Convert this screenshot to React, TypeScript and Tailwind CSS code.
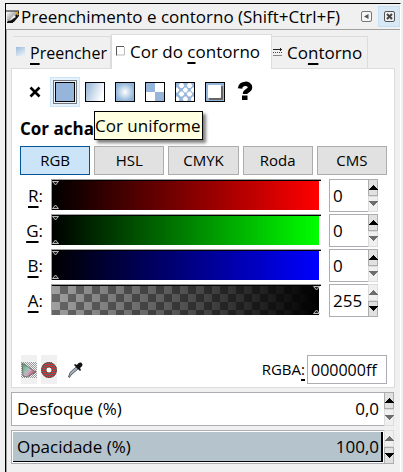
import type { ReactNode } from "react";

const tones = {
  r: "bg-linear-to-r/srgb from-black to-[#ff0000]",
  g: "bg-linear-to-r/srgb from-black to-[#00ff00]",
  b: "bg-linear-to-r/srgb from-black to-[#0000ff]",
  a: "bg-[linear-gradient(to_right,rgba(0,0,0,0),#000),repeating-conic-gradient(#666_0%_25%,#a0a0a0_0%_50%)] bg-size-[100%_100%,16px_16px]",
};

// One-pixel checkerboard that marks an icon as insensitive.
let checks = "";
for (let y = 0; y < 16; y++) {
  for (let x = y % 2; x < 16; x += 2) checks += `M${x} ${y}h1v1h-1z`;
}

function Arrow({ up, on, label }: { up?: boolean; on: boolean; label: string }) {
  return (
    <button
      aria-label={label}
      className={
        "flex min-h-0 flex-1 items-center justify-center border " +
        (on ? "border-[#adadad] bg-[#e1e1e1] text-black" : "border-[#dcdcdc] bg-[#f0f0f0] text-[#6d6d6d]")
      }
    >
      <svg width="9" height="5" viewBox="0 0 9 5" className="shrink-0" fill="currentColor" shapeRendering="crispEdges">
        <path d={up ? "M4 0h1v1h1v1h1v1h1v1h1v1H0V4h1V3h1V2h1V1h1z" : "M0 0h9v1H8v1H7v1H6v1H5v1H4V4H3V3H2V2H1V1H0z"} />
      </svg>
    </button>
  );
}

function Steps({ name, max }: { name: string; max?: boolean }) {
  return (
    <div className="flex w-2.5 shrink-0 flex-col">
      <Arrow up on={!max} label={"Aumentar " + name} />
      <Arrow on={!!max} label={"Diminuir " + name} />
    </div>
  );
}

function Marker() {
  return (
    <svg width="8" height="30" viewBox="0 0 8 30" className="h-full w-2" fill="#222" stroke="#bbb" strokeWidth="1">
      <path d="M.5 1.5h6l-3 3.5z" />
      <path d="M.5 28.5h6l-3-3.500z" />
    </svg>
  );
}

function Channel({ letter, tone, value }: { letter: string; tone: keyof typeof tones; value: number }) {
  const max = value === 255;
  return (
    <div className="flex h-[33px] items-center">
      <label htmlFor={"n" + tone} className="w-[31px] pr-2 text-right text-[17px]">
        <u className="decoration-2 underline-offset-4">{letter}</u>:
      </label>
      <div className="relative h-[31px] min-w-0 flex-1 self-start border-t border-l border-[#a0a0a0]">
        <div className="border-t border-black pr-0.5">
          <input
            type="range"
            min={0}
            max={255}
            defaultValue={value}
            aria-label={letter}
            className={
              "block h-[29px] w-full appearance-none [&::-webkit-slider-thumb]:appearance-none [&::-webkit-slider-thumb]:opacity-0 " +
              tones[tone]
            }
          />
        </div>
        <div className={"pointer-events-none absolute inset-y-0 " + (max ? "right-0" : "left-0")}>
          <Marker />
        </div>
      </div>
      <div className="ml-2 flex h-full w-[49px] shrink-0">
        <input
          id={"n" + tone}
          defaultValue={value}
          className="min-w-0 flex-1 border border-r-0 border-[#abadb3] bg-white pl-[3px] text-[17px]"
        />
        <Steps name={letter} max={max} />
      </div>
    </div>
  );
}

function Tab({ active, icon, children }: { active?: boolean; icon: ReactNode; children: ReactNode }) {
  return (
    <button
      role="tab"
      aria-selected={!!active}
      className={
        "flex shrink-0 items-center whitespace-nowrap border border-[#dcdcdc] text-[17px] " +
        (active
          ? "relative -mb-px h-[35px] w-[161px] gap-1 border-b-0 bg-white pl-1"
          : "h-8 border-b-0 border-l-0 bg-[#f0f0f0]")
      }
    >
      {icon}
      {children}
    </button>
  );
}

function Paint({ label, selected, children }: { label: string; selected?: boolean; children: ReactNode }) {
  return (
    <button
      aria-label={label}
      className={
        "flex size-[30px] items-center justify-center border " +
        (selected ? "border-[#cce4f7] bg-[#e5f1fb]" : "border-transparent")
      }
    >
      <svg width="26" height="26" viewBox="0 0 26 26" className="shrink-0">
        {children}
      </svg>
    </button>
  );
}

function Percent({ id, name, value, full }: { id: string; name: string; value: string; full?: boolean }) {
  return (
    <div className="mr-px flex h-[34px]">
      <div className="flex min-w-0 flex-1 border border-r-0 border-[#abadb3] bg-white p-px">
        <div
          className={
            "flex min-w-0 flex-1 items-center border-r-2 border-b " +
            (full ? "border-black bg-[#b5c3cd]" : "border-transparent")
          }
        >
          <label htmlFor={id} className="pl-1 text-[17px] whitespace-nowrap">
            {name}
          </label>
          <input id={id} defaultValue={value} className="min-w-0 flex-1 bg-transparent pr-0.5 text-right text-[17px]" />
        </div>
      </div>
      <Steps name={name} max={full} />
    </div>
  );
}

const box = { x: 3.5, y: 3.5, width: 19, height: 19, stroke: "#000" };

export default function App() {
  return (
    <div className="w-full bg-[#f0f0f0] pt-[3px] pr-0.5 pl-[5px] font-['Open_Sans','Noto_Sans',sans-serif] text-black">
      <svg width="0" height="0" className="absolute">
        <defs>
          <linearGradient id="lin" x2="1" y2=".4">
            <stop stopColor="#8fb1d3" />
            <stop offset="1" stopColor="#fff" />
          </linearGradient>
          <linearGradient id="fill" x2=".6" y2="1">
            <stop stopColor="#9dbbdc" />
            <stop offset="1" stopColor="#e4edf6" />
          </linearGradient>
          <radialGradient id="rad">
            <stop stopColor="#fff" />
            <stop offset="1" stopColor="#8fb4d9" />
          </radialGradient>
          <linearGradient id="pen" x2="1" y2="1">
            <stop stopColor="#fff" />
            <stop offset=".6" stopColor="#999" />
          </linearGradient>
          <linearGradient id="gam" x1="0" y1="0" x2="1" y2=".8">
            <stop stopColor="#2b9a5c" />
            <stop offset=".4" stopColor="#8fd0b0" />
            <stop offset=".6" stopColor="#d8b0d0" />
            <stop offset="1" stopColor="#b01818" />
          </linearGradient>
          <clipPath id="ring">
            <path clipRule="evenodd" d="M8 0a8 8 0 1 0 .01 0zM8 5a3 3 0 1 1-.01 0z" />
          </clipPath>
        </defs>
      </svg>
      <div className="border-t border-r border-l border-black border-r-white">
        <header className="flex h-[26px] items-center border-b border-[#a0a0a0]">
          <svg width="14" height="14" viewBox="0 0 14 14" className="shrink-0">
            <path d="M1 1h12L7 12H1z" fill="url(#pen)" />
            <path d="M0 1h13M1 12.5h6" stroke="#111" />
            <path d="M13 1v5L8 12l-7 1 1-2 4-1z" fill="#111" />
            <path d="M3 11 8 5l2 2z" fill="#eee" />
            <path d="m10.500 2 1.500 3" stroke="#dca52a" strokeWidth="2" />
          </svg>
          <h1 className="min-w-0 flex-1 pl-px text-[17px] whitespace-nowrap">Preenchimento e contorno (Shift+Ctrl+F)</h1>
          <button aria-label="Minimizar" className="mr-1.5 shrink-0">
            <svg width="11" height="11" viewBox="0 0 11 11">
              <rect x=".5" y=".5" width="10" height="10" rx="1.5" fill="#f5f5f5" stroke="#777" />
              <path d="M7.5 3v5L3 5.5z" fill="#555" />
            </svg>
          </button>
          <button
            aria-label="Fechar"
            className="flex h-[21px] w-[22px] shrink-0 items-center justify-center border border-[#c5dff5] bg-[#d9e8f5]"
          >
            <svg width="11" height="11" viewBox="0 0 11 11">
              <rect x=".5" y=".5" width="10" height="10" rx="1.5" fill="#eee" stroke="#555" />
              <path d="m3 3 5 5M8 3 3 8" stroke="#444" strokeWidth="2" />
            </svg>
          </button>
        </header>

        <main className="border-l border-[#a0a0a0] pt-1 pr-[5px] pb-2 pl-1">
          <div role="tablist" className="flex items-end pl-0.5">
            <Tab
              icon={
                <svg width="17" height="12" viewBox="0 0 17 12" className="shrink-0">
                  <rect x="3" y="0" width="9" height="9" fill="url(#fill)" />
                </svg>
              }
            >
              <span className="w-[80px] text-left text-[16px]">
                <u className="decoration-2 underline-offset-4">P</u>reencher
              </span>
            </Tab>
            <Tab
              active
              icon={
                <svg width="10" height="12" viewBox="0 0 10 12" className="shrink-0">
                  <path d="M.5 9.500V.5H8" fill="none" stroke="#555" />
                  <path d="M8.5 1v8H1" fill="none" stroke="#bbb" />
                </svg>
              }
            >
              <span>
                Cor do <u className="decoration-2 underline-offset-4">c</u>ontorno
              </span>
            </Tab>
            <Tab
              icon={
                <svg width="15" height="12" viewBox="0 0 15 12" className="shrink-0">
                  <path d="M1 2.5h9M8.500 1v3" stroke="#222" />
                  <path d="M1 5.5h9" stroke="#444" strokeDasharray="1 1" />
                  <path d="M1 8.500h9" stroke="#888" />
                </svg>
              }
            >
              <span className="w-[80px] text-left">
                Co<u className="decoration-2 underline-offset-4">n</u>torno
              </span>
            </Tab>
          </div>

          <section className="border border-[#dcdcdc] bg-white pt-2 pr-[7px] pb-[3px] pl-2">
            <div className="relative flex pb-2.5">
              <Paint label="Sem pintura">
                <path d="m8.500 8.500 9 9m0-9-9 9" stroke="#000" strokeWidth="2.6" />
              </Paint>
              <Paint label="Cor uniforme" selected>
                <rect x="1.500" y="1.500" width="23" height="23" fill="none" stroke="#000" strokeDasharray="1 1" />
                <rect {...box} fill="#95b5db" />
              </Paint>
              <Paint label="Degradê linear">
                <rect {...box} fill="url(#lin)" />
              </Paint>
              <Paint label="Degradê radial">
                <rect {...box} fill="url(#rad)" />
              </Paint>
              <Paint label="Padrão">
                <rect {...box} fill="#fff" />
                <path d="M4 4h9v9H4zM13 13h9v9h-9z" fill="#95b5db" />
              </Paint>
              <Paint label="Amostra">
                <rect {...box} fill="#95b5db" />
                <path
                  fill="#fff"
                  d="M8.500 4h2l2 2.500-2 2.500h-2l-2-2.500zM16.500 4h2l2 2.500-2 2.500h-2l-2-2.500zM4 8.500l1.500 0 2 2.500-2 2.500H4zM12.500 8.500h2l1.500 2.500-1.500 2.500h-2L10.500 11zM22 8.500h-1.500l-2 2.500 2 2.500H22zM8.500 12.500h2l2 2.500-2 2.500h-2l-2-2.500zM16.500 12.500h2l2 2.500-2 2.500h-2l-2-2.500zM4 17.500h1.500l2 2.500-1 2H4zM12.500 17.500h2l1.500 2.500-1 2h-3l-1.500-2zM22 17.500h-1.500l-2 2.500 1 2H22z"
                />
              </Paint>
              <Paint label="Indefinido">
                <rect {...box} fill="#95b5db" />
                <rect x="7" y="7" width="14" height="14" rx="1" fill="#666" />
                <rect x="6" y="6" width="13" height="13" rx="1" fill="#fff" />
              </Paint>
              <Paint label="Desconhecido">
                <path d="M8 9.500C8.500 3.500 18 3.500 18 8.500c0 3.500-5 3-5 6.500" fill="none" stroke="#000" strokeWidth="4.500" />
                <path d="M10 16.500h5.500V21H10z" />
              </Paint>
              <div
                role="tooltip"
                className="absolute top-[34px] left-[74px] z-10 flex h-[29px] w-[109px] items-center border border-black bg-[#ffffe1] text-[17px] whitespace-nowrap shadow-[3px_3px_3px_rgba(0,0,0,0.5)]"
              >
                Cor uniforme
              </div>
            </div>
            <h2 className="h-[29px] overflow-hidden pt-px text-[17px] leading-[22px] font-bold whitespace-nowrap">
              Cor achatada
            </h2>
            <div className="grid grid-cols-5 gap-1">
              {["RGB", "HSL", "CMYK", "Roda", "CMS"].map((m, i) => (
                <button
                  key={m}
                  className={
                    "h-[29px] border text-[15px] " +
                    (i === 0 ? "border-[#005499] bg-[#cce4f7]" : "border-[#adadad] bg-[#e1e1e1]")
                  }
                >
                  {m}
                </button>
              ))}
            </div>
            <div className="mt-1 mr-[9px] flex flex-col gap-0.5">
              <Channel letter="R" tone="r" value={0} />
              <Channel letter="G" tone="g" value={0} />
              <Channel letter="B" tone="b" value={0} />
              <Channel letter="A" tone="a" value={255} />
            </div>
            <div className="mt-[38px] flex h-[29px] items-center pl-px">
              <button aria-label="Fora da gama" className="mr-1 flex h-full w-4 items-center bg-[#f0f0f0]">
                <svg width="16" height="16" viewBox="0 0 16 16">
                  <path d={checks} fill="#999" />
                  <path d="m1 1 14 9-9 5-4-1z" fill="url(#gam)" stroke="#555" strokeWidth=".8" />
                  <path d={checks} fill="#999" opacity=".4" />
                </svg>
              </button>
              <button aria-label="Gerenciamento de cor" className="mr-2.5 flex h-full w-4 items-center bg-[#f0f0f0]">
                <svg width="16" height="16" viewBox="0 0 16 16">
                  <circle cx="8" cy="8" r="5.300" fill="#fff" stroke="#d22c2c" strokeWidth="5" />
                  <path d={checks} fill="#666" clipPath="url(#ring)" />
                  <circle cx="8" cy="8" r="7.500" fill="none" stroke="#444" opacity=".6" />
                  <circle cx="8" cy="8" r="3" fill="none" stroke="#444" opacity=".6" />
                </svg>
              </button>
              <button aria-label="Conta-gotas">
                <svg width="16" height="16" viewBox="0 0 16 16">
                  <path d="M9 5 3 10.500 1.500 15l1 .5L4 13l7-6z" fill="#9eb0c4" stroke="#444" strokeWidth=".8" />
                  <path d="m7 3 1-1 2 1c1-2 3-3 4.500-2S16 4 13 6l1 2-1 1z" fill="#111" />
                </svg>
              </button>
              <label htmlFor="rgba" className="ml-auto pr-0.5 text-[15px]">
                RGBA<u className="decoration-2 underline-offset-4">:</u>
              </label>
              <input id="rgba" defaultValue="000000ff" className="h-full w-20 border border-[#abadb3] bg-white pl-[3px] text-[16px]" />
            </div>
          </section>

          <div className="mt-1 flex flex-col gap-1">
            <Percent id="blur" name="Desfoque (%)" value="0,0" />
            <Percent id="opacity" name="Opacidade (%)" value="100,0" full />
          </div>
        </main>
      </div>
    </div>
  );
}
